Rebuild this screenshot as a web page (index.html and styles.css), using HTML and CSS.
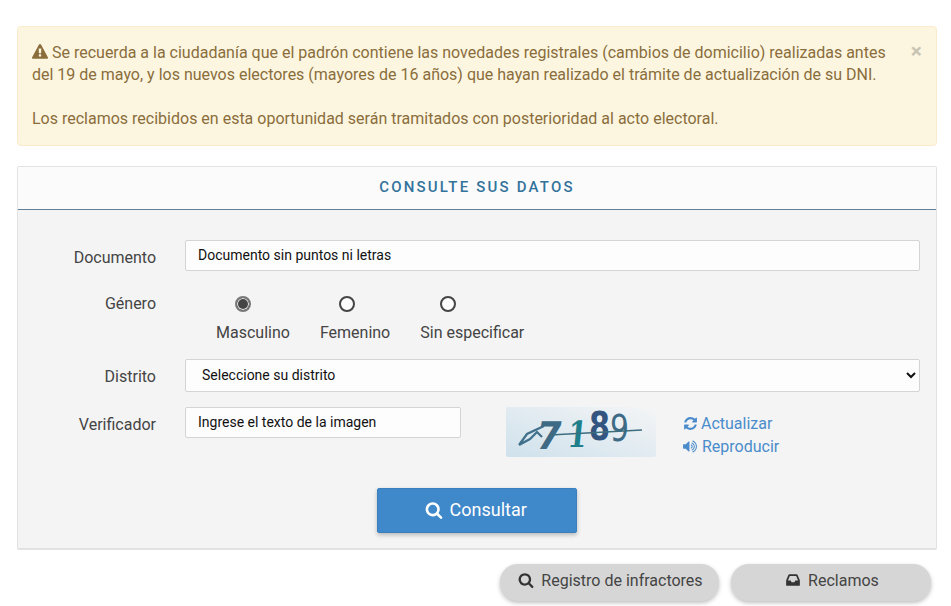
FILE: index.html
```html
<!DOCTYPE html>
<html>
<head>
    <title>Consulte sus datos</title>
    <link rel="stylesheet" href="styles.css">
</head>
<body>
    <svg class="icon-defs">
        <symbol id="i-warning" viewBox="0 0 1792 1792"><path d="M1024 1375v-190q0-14-9.5-23.5t-22.5-9.5h-192q-13 0-22.5 9.5t-9.5 23.5v190q0 14 9.5 23.5t22.5 9.5h192q13 0 22.5-9.5t9.5-23.5zm-2-374l18-459q0-12-10-19-13-11-24-11h-220q-11 0-24 11-10 7-10 21l17 457q0 10 10 16.5t24 6.5h185q14 0 23.5-6.5t10.5-16.5zm-14-934l768 1408q35 63-2 126-17 29-46.5 46t-63.5 17h-1536q-34 0-63.5-17t-46.5-46q-37-63-2-126l768-1408q17-31 47-49t65-18 65 18 47 49z"/></symbol>
        <symbol id="i-search" viewBox="0 0 1792 1792"><path d="M1216 832q0-185-131.5-316.5t-316.5-131.5-316.5 131.5-131.5 316.5 131.5 316.5 316.5 131.5 316.5-131.5 131.5-316.5zm512 832q0 52-38 90t-90 38q-54 0-90-38l-343-342q-179 124-399 124-143 0-273.5-55.5t-225-150-150-225-55.5-273.5 55.5-273.5 150-225 225-150 273.5-55.5 273.5 55.5 225 150 150 225 55.5 273.5q0 220-124 399l343 343q37 37 37 90z"/></symbol>
        <symbol id="i-refresh" viewBox="0 0 1792 1792"><path d="M1639 1056q0 5-1 7-64 268-268 434.5t-478 166.5q-146 0-282.5-55t-243.5-157l-129 129q-19 19-45 19t-45-19-19-45v-448q0-26 19-45t45-19h448q26 0 45 19t19 45-19 45l-137 137q71 66 161 102t187 36q134 0 250-65t186-179q11-17 53-117 8-23 30-23h192q13 0 22.5 9.5t9.5 22.5zm25-800v448q0 26-19 45t-45 19h-448q-26 0-45-19t-19-45 19-45l138-138q-148-137-349-137-134 0-250 65t-186 179q-11 17-53 117-8 23-30 23h-199q-13 0-22.5-9.5t-9.5-22.5v-7q65-268 270-434.5t480-166.5q146 0 284 55.5t245 156.5l130-129q19-19 45-19t45 19 19 45z"/></symbol>
        <symbol id="i-volume" viewBox="0 0 1792 1792"><path d="M832 352v1088q0 26-19 45t-45 19-45-19l-333-333h-262q-26 0-45-19t-19-45v-384q0-26 19-45t45-19h262l333-333q19-19 45-19t45 19 19 45zm384 544q0 76-42.5 141.5t-112.5 93.5q-10 5-25 5-26 0-45-18.5t-19-45.5q0-21 12-35.5t29-25 34-23 29-36 12-56.5-12-56.5-29-36-34-23-29-25-12-35.5q0-27 19-45.5t45-18.5q15 0 25 5 70 27 112.5 93t42.5 142zm256 0q0 153-85 282.5t-225 188.5q-13 5-25 5-27 0-46-19t-19-45q0-39 39-59 56-29 76-44 74-54 115.5-135.5t41.5-173.5-41.5-173.5-115.5-135.5q-20-15-76-44-39-20-39-59 0-26 19-45t45-19q13 0 26 5 140 59 225 188.5t85 282.5zm256 0q0 230-127 422.5t-338 283.5q-13 5-26 5-26 0-45-19t-19-45q0-36 39-59 7-4 22.5-10.5t22.5-10.5q46-25 82-51 123-91 192-227t69-289-69-289-192-227q-36-26-82-51-7-4-22.5-10.5t-22.5-10.5q-39-23-39-59 0-26 19-45t45-19q13 0 26 5 211 91 338 283.5t127 422.5z"/></symbol>
        <symbol id="i-inbox" viewBox="0 0 1792 1792"><path d="M1151 960h316q-1-3-2.5-8.5t-2.5-7.5l-212-496h-708l-212 496q-1 3-2.5 8.5t-2.5 7.5h316l95 192h320zm513 30v482q0 26-19 45t-45 19h-1408q-26 0-45-19t-19-45v-482q0-62 25-123l238-552q10-25 36.5-42t52.5-17h832q26 0 52.5 17t36.5 42l238 552q25 61 25 123z"/></symbol>
    </svg>

    <div class="alert">
        <span class="alert-close">×</span>
        <svg class="icon icon-warning"><use href="#i-warning"/></svg>
        Se recuerda a la ciudadanía que el padrón contiene las novedades registrales (cambios de domicilio) realizadas antes del 19 de mayo, y los nuevos electores (mayores de 16 años) que hayan realizado el trámite de actualización de su DNI.<br><br>
        Los reclamos recibidos en esta oportunidad serán tramitados con posterioridad al acto electoral.
    </div>

    <div class="panel">
        <div class="panel-heading">CONSULTE SUS DATOS</div>
        <form class="panel-body">
            <div class="form-row row-documento">
                <label class="form-label">Documento</label>
                <input class="form-input" type="text" placeholder="Documento sin puntos ni letras">
            </div>
            <div class="form-row row-genero">
                <label class="form-label">Género</label>
                <div class="radio-group">
                    <label class="radio-option"><input type="radio" name="genero" checked><span>Masculino</span></label>
                    <label class="radio-option"><input type="radio" name="genero"><span>Femenino</span></label>
                    <label class="radio-option"><input type="radio" name="genero"><span>Sin especificar</span></label>
                </div>
            </div>
            <div class="form-row row-distrito">
                <label class="form-label">Distrito</label>
                <select class="form-select">
                    <option>Seleccione su distrito</option>
                </select>
            </div>
            <div class="form-row row-verificador">
                <label class="form-label">Verificador</label>
                <div class="captcha-row">
                    <input class="form-input captcha-input" type="text" placeholder="Ingrese el texto de la imagen">
                    <svg class="captcha" width="150" height="50" viewBox="0 0 150 50">
                        <defs>
                            <linearGradient id="captcha-bg" x1="0" y1="1" x2="1" y2="0">
                                <stop offset="0" stop-color="#cfe1ec"/>
                                <stop offset="1" stop-color="#f4f5f6"/>
                            </linearGradient>
                        </defs>
                        <rect width="150" height="50" rx="2" fill="url(#captcha-bg)"/>
                        <path d="M13 38 L21 27 L38 19 M13 38 L24 32 L31 25 L36 30" fill="none" stroke="#40708c" stroke-width="2.2"/>
                        <text class="captcha-bold" x="28" y="42" font-size="38" fill="#3f6a86" textLength="25" lengthAdjust="spacingAndGlyphs" transform="skewX(-10) translate(8 0)">7</text>
                        <text class="captcha-serif" x="61" y="40" font-size="36" fill="#1f7f8a" textLength="19" lengthAdjust="spacingAndGlyphs" transform="skewX(-6) translate(4 0)">1</text>
                        <text class="captcha-bold" x="83" y="33" font-size="39" fill="#33557f" textLength="21" lengthAdjust="spacingAndGlyphs">8</text>
                        <text class="captcha-light" x="104" y="34" font-size="38" fill="#3d6a85" textLength="19" lengthAdjust="spacingAndGlyphs">9</text>
                        <path d="M44 28 L136 23" stroke="#3b6d7e" stroke-width="1.3"/>
                    </svg>
                    <div class="captcha-links">
                        <a class="captcha-link"><svg class="icon icon-refresh"><use href="#i-refresh"/></svg> Actualizar</a>
                        <a class="captcha-link"><svg class="icon icon-volume"><use href="#i-volume"/></svg> Reproducir</a>
                    </div>
                </div>
            </div>
            <div class="form-actions">
                <button class="btn-primary" type="button"><svg class="icon"><use href="#i-search"/></svg> Consultar</button>
            </div>
        </form>
    </div>

    <div class="footer-buttons">
        <a class="btn-pill pill-registro"><svg class="icon"><use href="#i-search"/></svg> Registro de infractores</a>
        <a class="btn-pill pill-reclamos"><svg class="icon"><use href="#i-inbox"/></svg> Reclamos</a>
    </div>
</body>
</html>
```

FILE: styles.css
```css
* {
    box-sizing: border-box;
}
html, body {
    overflow: hidden;
}
body {
    margin: 0;
    padding: 26px 14px 0 17px;
    height: 606px;
    font-family: Roboto, "Liberation Sans", sans-serif;
    font-size: 16px;
    line-height: 22px;
    color: #333;
    background: #fff;
}
.icon-defs {
    display: none;
}
.icon {
    width: 16px;
    height: 16px;
    fill: currentColor;
    vertical-align: -2px;
}
.alert {
    position: relative;
    height: 120px;
    padding: 15px 47px 15px 14px;
    background: #fcf6e1;
    border: 1px solid #faebcc;
    border-radius: 4px;
    color: #8a6d3b;
}
.alert-close {
    position: absolute;
    top: 13px;
    right: 14px;
    font-size: 21px;
    font-weight: 700;
    color: #000;
    opacity: 0.2;
}
.panel {
    margin-top: 20px;
    height: 384px;
    background: #f4f4f4;
    border: 1px solid #e2e2e2;
    border-bottom-width: 2px;
    border-radius: 2px;
}
.panel-heading {
    height: 43px;
    line-height: 41px;
    text-align: center;
    font-size: 15px;
    font-weight: 500;
    letter-spacing: 2.2px;
    color: #33739b;
    background: #fbfbfb;
    border-bottom: 1px solid #5f8098;
}
.panel-body {
    padding: 30px 16px 0 20px;
}
.form-row {
    display: grid;
    grid-template-columns: 118px 1fr;
    column-gap: 29px;
}
.form-label {
    text-align: right;
    color: #444;
    padding-top: 7px;
}
.row-genero {
    margin-top: 21px;
}
.row-genero .form-label {
    padding-top: 1px;
}
.row-distrito {
    margin-top: 15px;
}
.row-verificador {
    margin-top: 15px;
}
.form-input, .form-select {
    width: 100%;
    height: 31px;
    font-family: inherit;
    font-size: 14px;
    color: #111;
    background: #fdfdfd;
    border: 1px solid #d4d4d4;
    border-radius: 2px;
    padding: 0 12px 2px;
    outline: none;
}
.form-input::placeholder {
    color: #111;
    opacity: 1;
}
.form-select {
    height: 33px;
}
.radio-group {
    display: flex;
    gap: 30px;
    padding-left: 31px;
}
.radio-option {
    display: flex;
    flex-direction: column;
    align-items: flex-start;
    color: #444;
}
.radio-option input {
    appearance: none;
    width: 16px;
    height: 16px;
    margin: 4px 0 10px 19px;
    border: 2px solid #444;
    border-radius: 50%;
    background: #fdfdfd;
}
.radio-option:last-child input {
    margin-left: 20px;
}
.radio-option input:checked {
    border-color: #777;
    background: #444;
    box-shadow: inset 0 0 0 1px #eee;
}
.captcha-row {
    display: flex;
    align-items: flex-start;
}
.captcha-input {
    width: 276px;
}
.captcha {
    margin-left: 45px;
    flex: none;
    overflow: visible;
}
.captcha-bold {
    font-family: "DejaVu Sans", sans-serif;
    font-weight: 700;
}
.captcha-serif {
    font-family: "DejaVu Serif", serif;
    font-weight: 700;
}
.captcha-light {
    font-family: "DejaVu Sans", sans-serif;
}
.captcha-links {
    margin-left: 26px;
    padding-top: 6px;
    display: flex;
    flex-direction: column;
    gap: 1px;
}
.captcha-link {
    color: #4a8ccb;
    white-space: nowrap;
}
.captcha-link .icon {
    width: 15px;
    height: 15px;
}
.captcha-link .icon-refresh {
    margin: 0 -1px 0 1px;
}
.captcha-link .icon-volume {
    width: 16px;
}
.form-actions {
    margin-top: 30px;
    padding-right: 4px;
    display: flex;
    justify-content: center;
}
.btn-primary {
    width: 200px;
    height: 45px;
    padding: 0 2px 3px 0;
    font-family: inherit;
    font-size: 18px;
    color: #fff;
    background: #3f88c9;
    border: 1px solid #3a80bf;
    border-radius: 2px;
    box-shadow: 0 2px 4px rgba(0,0,0,0.25);
}
.btn-primary .icon {
    width: 18px;
    height: 18px;
    margin-right: 2px;
    vertical-align: -3px;
}
.footer-buttons {
    margin-top: 14px;
    padding-right: 6px;
    display: flex;
    justify-content: flex-end;
    gap: 12px;
}
.btn-pill {
    height: 37px;
    padding-left: 2px;
    line-height: 34px;
    text-align: center;
    color: #444;
    background: #d6d6d6;
    border-radius: 18px;
    box-shadow: 0 2px 4px rgba(0,0,0,0.25);
}
.btn-pill .icon {
    color: #333;
    width: 16px;
    height: 16px;
    margin-right: 3px;
}
.pill-registro {
    width: 219px;
}
.pill-reclamos {
    width: 200px;
}
```
